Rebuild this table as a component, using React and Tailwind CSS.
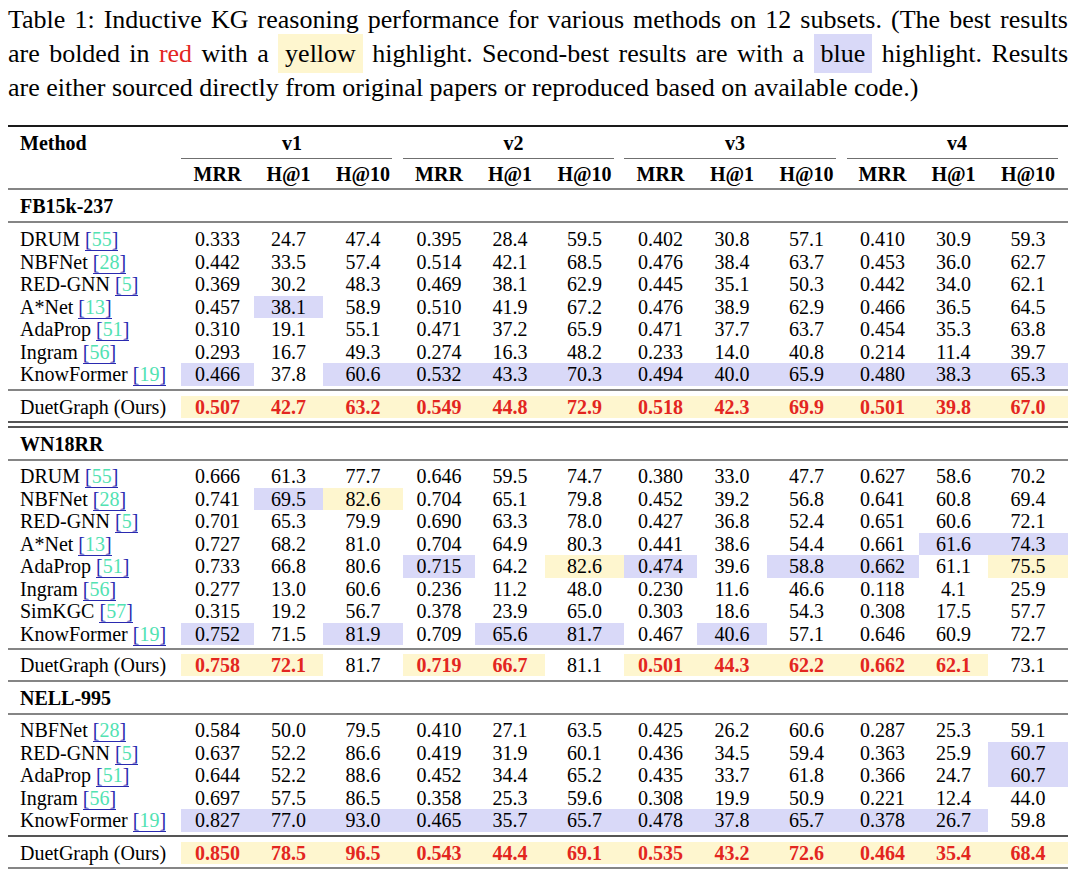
import React from "react";

const GRID =
  "grid grid-cols-[173px_73px_69px_80px_72px_70px_79px_73px_70px_79px_73px_69px_80px]";
const BLUE = "bg-[#d9d9f8]";
const YEL = "bg-[#fef6cf]";

const fb = [
  { m: "DRUM", c: "55", v: "0.333 24.7 47.4 0.395 28.4 59.5 0.402 30.8 57.1 0.410 30.9 59.3", b: [], y: [] },
  { m: "NBFNet", c: "28", v: "0.442 33.5 57.4 0.514 42.1 68.5 0.476 38.4 63.7 0.453 36.0 62.7", b: [], y: [] },
  { m: "RED-GNN", c: "5", v: "0.369 30.2 48.3 0.469 38.1 62.9 0.445 35.1 50.3 0.442 34.0 62.1", b: [], y: [] },
  { m: "A*Net", c: "13", v: "0.457 38.1 58.9 0.510 41.9 67.2 0.476 38.9 62.9 0.466 36.5 64.5", b: [1], y: [] },
  { m: "AdaProp", c: "51", v: "0.310 19.1 55.1 0.471 37.2 65.9 0.471 37.7 63.7 0.454 35.3 63.8", b: [], y: [] },
  { m: "Ingram", c: "56", v: "0.293 16.7 49.3 0.274 16.3 48.2 0.233 14.0 40.8 0.214 11.4 39.7", b: [], y: [] },
  { m: "KnowFormer", c: "19", v: "0.466 37.8 60.6 0.532 43.3 70.3 0.494 40.0 65.9 0.480 38.3 65.3", b: [0, 2, 3, 4, 5, 6, 7, 8, 9, 10, 11], y: [] },
];
const fbOurs = { v: "0.507 42.7 63.2 0.549 44.8 72.9 0.518 42.3 69.9 0.501 39.8 67.0", y: [0, 1, 2, 3, 4, 5, 6, 7, 8, 9, 10, 11] };

const wn = [
  { m: "DRUM", c: "55", v: "0.666 61.3 77.7 0.646 59.5 74.7 0.380 33.0 47.7 0.627 58.6 70.2", b: [], y: [] },
  { m: "NBFNet", c: "28", v: "0.741 69.5 82.6 0.704 65.1 79.8 0.452 39.2 56.8 0.641 60.8 69.4", b: [1], y: [2] },
  { m: "RED-GNN", c: "5", v: "0.701 65.3 79.9 0.690 63.3 78.0 0.427 36.8 52.4 0.651 60.6 72.1", b: [], y: [] },
  { m: "A*Net", c: "13", v: "0.727 68.2 81.0 0.704 64.9 80.3 0.441 38.6 54.4 0.661 61.6 74.3", b: [10, 11], y: [] },
  { m: "AdaProp", c: "51", v: "0.733 66.8 80.6 0.715 64.2 82.6 0.474 39.6 58.8 0.662 61.1 75.5", b: [3, 6, 8, 9], y: [5, 11] },
  { m: "Ingram", c: "56", v: "0.277 13.0 60.6 0.236 11.2 48.0 0.230 11.6 46.6 0.118 4.1 25.9", b: [], y: [] },
  { m: "SimKGC", c: "57", v: "0.315 19.2 56.7 0.378 23.9 65.0 0.303 18.6 54.3 0.308 17.5 57.7", b: [], y: [] },
  { m: "KnowFormer", c: "19", v: "0.752 71.5 81.9 0.709 65.6 81.7 0.467 40.6 57.1 0.646 60.9 72.7", b: [0, 2, 4, 5, 7], y: [] },
];
const wnOurs = { v: "0.758 72.1 81.7 0.719 66.7 81.1 0.501 44.3 62.2 0.662 62.1 73.1", y: [0, 1, 3, 4, 6, 7, 8, 9, 10] };

const nell = [
  { m: "NBFNet", c: "28", v: "0.584 50.0 79.5 0.410 27.1 63.5 0.425 26.2 60.6 0.287 25.3 59.1", b: [], y: [] },
  { m: "RED-GNN", c: "5", v: "0.637 52.2 86.6 0.419 31.9 60.1 0.436 34.5 59.4 0.363 25.9 60.7", b: [11], y: [] },
  { m: "AdaProp", c: "51", v: "0.644 52.2 88.6 0.452 34.4 65.2 0.435 33.7 61.8 0.366 24.7 60.7", b: [11], y: [] },
  { m: "Ingram", c: "56", v: "0.697 57.5 86.5 0.358 25.3 59.6 0.308 19.9 50.9 0.221 12.4 44.0", b: [], y: [] },
  { m: "KnowFormer", c: "19", v: "0.827 77.0 93.0 0.465 35.7 65.7 0.478 37.8 65.7 0.378 26.7 59.8", b: [0, 1, 2, 3, 4, 5, 6, 7, 8, 9, 10], y: [] },
];
const nellOurs = { v: "0.850 78.5 96.5 0.543 44.4 69.1 0.535 43.2 72.6 0.464 35.4 68.4", y: [0, 1, 2, 3, 4, 5, 6, 7, 8, 9, 10, 11] };

function Cite({ n }) {
  return (
    <span className="border-b-[1.5px] border-[#2a2ab0] leading-none">
      <span className="text-[#2a2ab0]">[</span>
      <span className="text-[#52e2b2]">{n}</span>
      <span className="text-[#2a2ab0]">]</span>
    </span>
  );
}

function Row({ r }) {
  const vals = r.v.split(" ");
  return (
    <div className={GRID + " h-[22.5px] leading-[22.5px]"}>
      <div className="pl-[12px] whitespace-nowrap">
        {r.m} <Cite n={r.c} />
      </div>
      {vals.map((x, i) => (
        <div
          key={i}
          className={
            "text-center " +
            (r.b.includes(i) ? BLUE : r.y.includes(i) ? YEL : "")
          }
        >
          {x}
        </div>
      ))}
    </div>
  );
}

function Ours({ r }) {
  const vals = r.v.split(" ");
  return (
    <div className={GRID + " h-[22px] leading-[22px]"}>
      <div className="pl-[12px] whitespace-nowrap">DuetGraph (Ours)</div>
      {vals.map((x, i) => (
        <div
          key={i}
          className={
            "text-center " +
            (r.y.includes(i) ? YEL + " text-[#e3261f] font-bold" : "")
          }
        >
          {x}
        </div>
      ))}
    </div>
  );
}

const Rule = () => <div className="h-[2px] bg-[#858585]" />;
const DarkRule = () => <div className="h-[2px] bg-[#555555]" />;

function Section({ name }) {
  return (
    <div className="h-[31px] flex items-center pl-[12px] font-bold">{name}</div>
  );
}

export default function App() {
  return (
    <div
      className="bg-white w-[1080px] h-[879px] overflow-hidden text-black"
      style={{ fontFamily: '"Liberation Serif", "Times New Roman", serif' }}
    >
      <div className="ml-[8px] w-[1060px] pt-[3px]">
        <div className="text-[26px] leading-[34px]">
          <div className="text-justify [text-align-last:justify] whitespace-nowrap">
            Table 1: Inductive KG reasoning performance for various methods on 12 subsets. (The best results
          </div>
          <div className="text-justify [text-align-last:justify] whitespace-nowrap">
            are bolded in <span className="text-[#e3261f]">red</span> with a{" "}
            <span className="bg-[#fef6cf] px-[7px] py-[5px]">yellow</span>{" "}
            highlight. Second-best results are with a{" "}
            <span className="bg-[#d9d9f8] px-[7px] py-[5px]">blue</span>{" "}
            highlight. Results
          </div>
          <div className="whitespace-nowrap">
            are either sourced directly from original papers or reproduced based on available code.)
          </div>
        </div>

        <div className="mt-[20px] text-[20px]">
          <div className="h-[2px] bg-[#1a1a1a]" />
          <div className={GRID + " h-[31px] items-center font-bold"}>
            <div className="pl-[12px]">Method</div>
            <div className="col-span-3 text-center">v1</div>
            <div className="col-span-3 text-center">v2</div>
            <div className="col-span-3 text-center">v3</div>
            <div className="col-span-3 text-center">v4</div>
          </div>
          <div className={GRID + " h-[1px]"}>
            <div />
            <div className="col-span-3 mr-[11px] bg-[#6f6f6f]" />
            <div className="col-span-3 mr-[10px] bg-[#6f6f6f]" />
            <div className="col-span-3 mr-[10px] bg-[#6f6f6f]" />
            <div className="col-span-3 mr-[10px] ml-[1px] bg-[#6f6f6f]" />
          </div>
          <div className={GRID + " h-[29px] items-center font-bold"}>
            <div />
            {["v1", "v2", "v3", "v4"].map((g) => (
              <React.Fragment key={g}>
                <div className="text-center">MRR</div>
                <div className="text-center">H@1</div>
                <div className="text-center">H@10</div>
              </React.Fragment>
            ))}
          </div>
          <Rule />

          <Section name="FB15k-237" />
          <Rule />
          <div className="pt-[5px] pb-[3px]">
            {fb.map((r) => (
              <Row key={r.m} r={r} />
            ))}
          </div>
          <Rule />
          <div className="pt-[5.5px] pb-[3px]">
            <Ours r={fbOurs} />
          </div>
          <DarkRule />
          <div className="h-[3px]" />
          <DarkRule />

          <Section name="WN18RR" />
          <Rule />
          <div className="pt-[4px] pb-[3px]">
            {wn.map((r) => (
              <Row key={r.m} r={r} />
            ))}
          </div>
          <Rule />
          <div className="pt-[4px] pb-[4px]">
            <Ours r={wnOurs} />
          </div>
          <Rule />

          <Section name="NELL-995" />
          <Rule />
          <div className="pt-[4px] pb-[3px]">
            {nell.map((r) => (
              <Row key={r.m} r={r} />
            ))}
          </div>
          <DarkRule />
          <div className="pt-[5.5px] pb-[3px]">
            <Ours r={nellOurs} />
          </div>
          <Rule />
        </div>
      </div>
    </div>
  );
}
